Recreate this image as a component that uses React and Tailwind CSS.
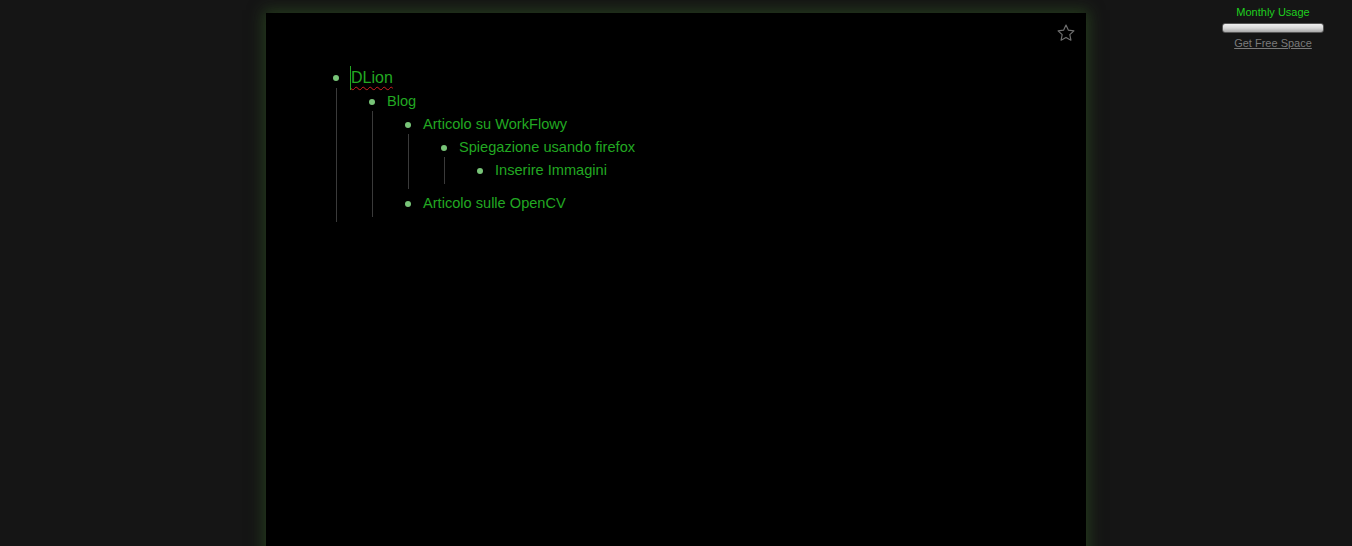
import { useState } from 'react';

const tree = {
  name: 'DLion',
  top: true,
  children: [
    {
      name: 'Blog',
      children: [
        {
          name: 'Articolo su WorkFlowy',
          children: [
            {
              name: 'Spiegazione usando firefox',
              children: [{ name: 'Inserire Immagini' }],
            },
          ],
        },
        { name: 'Articolo sulle OpenCV' },
      ],
    },
  ],
};

function Item({ node }) {
  return (
    <div>
      <div className="flex items-center h-[23px]">
        <div className="w-[12px] flex justify-center shrink-0">
          <span className="block w-[6px] h-[6px] rounded-full bg-[#78c478]" />
        </div>
        {node.top ? (
          <span className="ml-[8px] text-[16px] text-[#22a822] border-l border-[#22a822] underline decoration-wavy decoration-[#d02020] decoration-1 underline-offset-[3px]">
            DLion
          </span>
        ) : (
          <span className="ml-[9px] text-[14.6px] text-[#22a822]">{node.name}</span>
        )}
      </div>
      {node.children && (
        <div className={node.top ? 'relative ml-[6px] mt-[1px] pb-[5px] pl-[30px]' : 'relative ml-[6px] pb-[5px] pl-[30px]'}>
          {/* guide line */}
          <span className="absolute left-0 top-[-2px] bottom-[3px] w-px bg-[#3a3a3a]" />
          {node.children.map((c) => (
            <Item key={c.name} node={c} />
          ))}
        </div>
      )}
    </div>
  );
}

export default function App() {
  const [starred] = useState(false);
  return (
    <div
      className="relative w-full h-[546px] overflow-hidden bg-[#151515]"
      style={{ fontFamily: '"Liberation Sans", Arial, sans-serif' }}
    >
      {/* main panel */}
      <div className="relative ml-[266px] mt-[13px] w-[820px] h-[560px] bg-black shadow-[0_0_14px_3px_rgba(50,90,35,0.55)]">
        <svg
          className="absolute right-[10px] top-[10px]"
          width="20"
          height="20"
          viewBox="0 0 24 24"
          fill={starred ? '#666' : 'none'}
          stroke="#707070"
          strokeWidth="1.4"
          strokeLinejoin="round"
        >
          <path d="M12 2.5l2.9 6.1 6.6.8-4.9 4.6 1.3 6.6L12 17.3l-5.9 3.3 1.3-6.6-4.9-4.6 6.6-.8z" />
        </svg>
        <div className="pt-[53px] pl-[64px]">
          <Item node={tree} />
        </div>
      </div>

      {/* usage widget */}
      <div className="absolute top-[5px] left-[1212px] w-[122px] flex flex-col items-center">
        <span className="text-[11px] leading-[14px] text-[#1fd01f]">Monthly Usage</span>
        <div className="mt-[4px] w-[102px] h-[10px] rounded-[3px] border border-[#555] bg-gradient-to-b from-[#f0f0f0] via-[#d8d8d8] to-[#a8a8a8]" />
        <a className="mt-[3px] text-[11px] leading-[14px] text-[#7a7a7a] underline" href="#">
          Get Free Space
        </a>
      </div>
    </div>
  );
}
